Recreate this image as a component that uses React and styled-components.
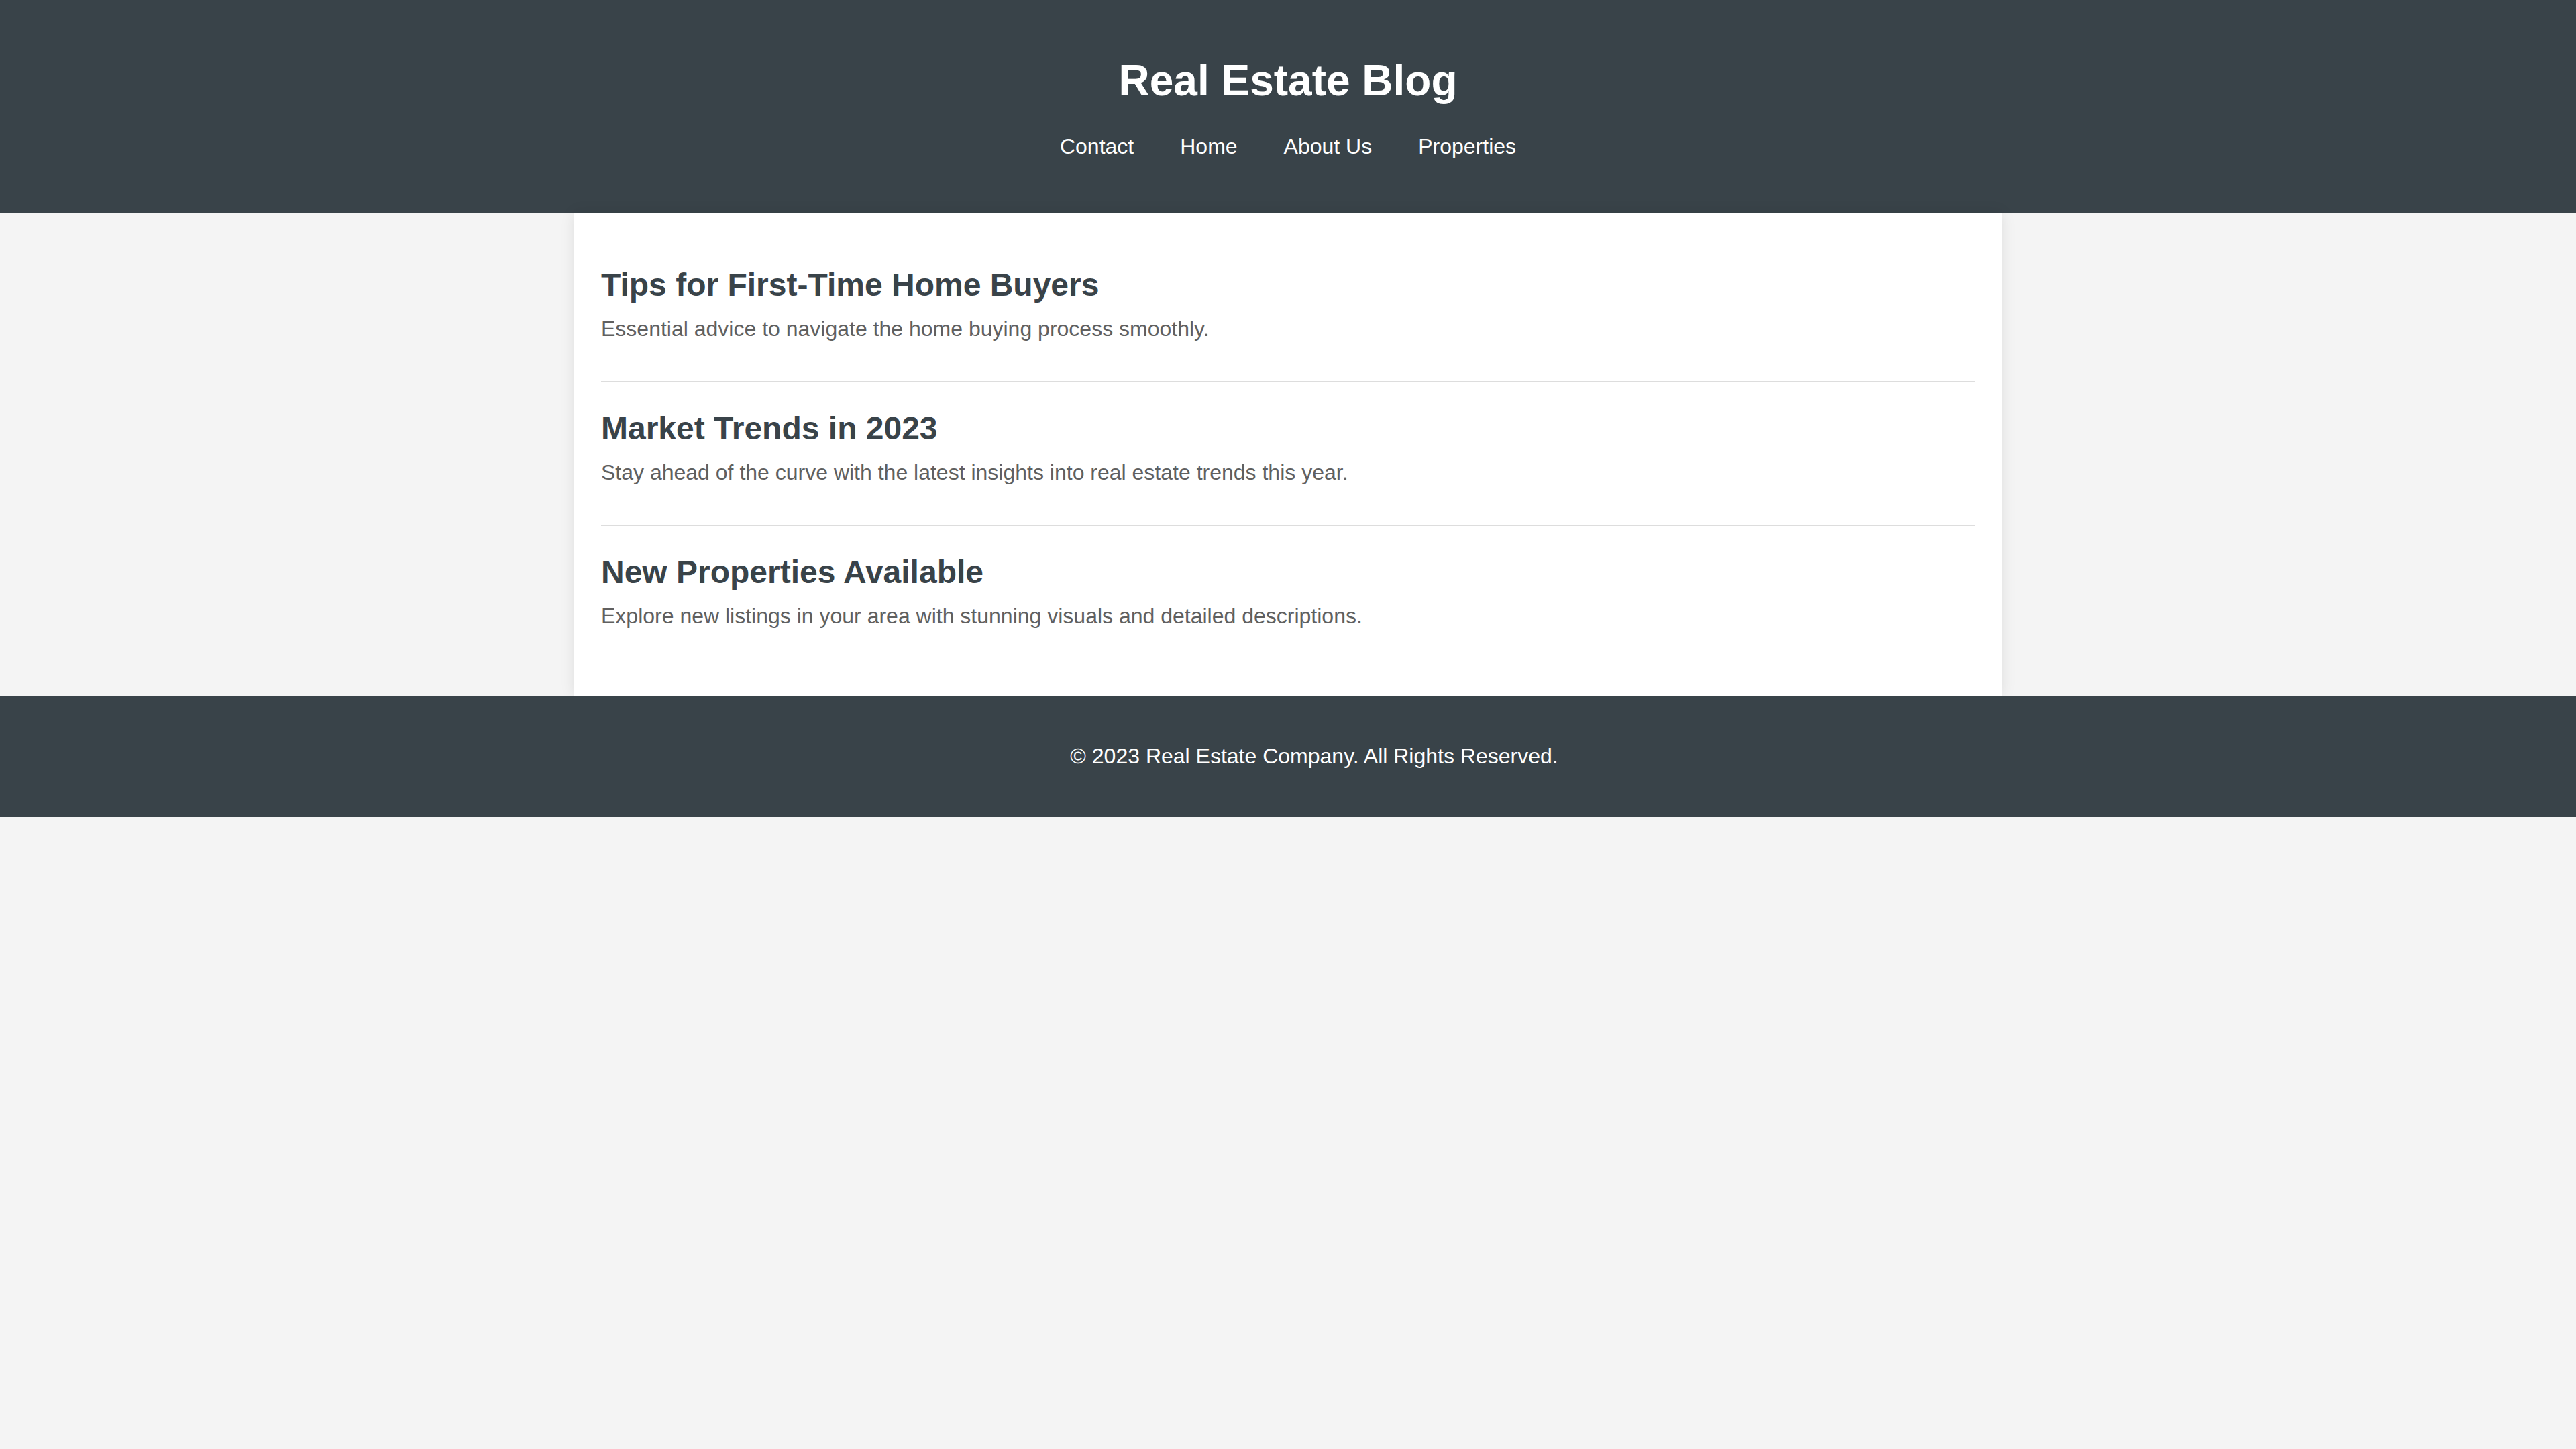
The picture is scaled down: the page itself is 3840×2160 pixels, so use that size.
import styled, { createGlobalStyle } from "styled-components";

const GlobalStyle = createGlobalStyle`
  body {
    margin: 0;
    background-color: #f4f4f4;
    font-family: "Liberation Sans", Arial, Helvetica, sans-serif;
  }
`;

const Header = styled.header`
  background-color: #394349;
  color: #fff;
  text-align: center;
  padding: 40px 0 81px;

  >h1 {
    font-size: 64px;
    font-weight: bold;
    margin: 43px 0;
    line-height: normal;
  }
`;

const Nav = styled.nav`
  >ul {
    margin: 0;
    padding: 0;
    list-style-type: none;
    display: flex;
    justify-content: center;
    gap: 69px;

    >li {
      font-size: 32px;
      line-height: normal;

      >a {
        color: #fff;
        text-decoration: none;
      }
    }
  }
`;

const Card = styled.main`
  box-sizing: border-box;
  width: 2128px;
  margin: 0 auto;
  padding: 38px 40px 41px;
  background-color: #fff;
  box-shadow: 0 0 20px rgba(0, 0, 0, 0.1);
`;

const Post = styled.article`
  padding-bottom: 59px;
  border-bottom: ${(props) => (props.$last ? "none" : "2px solid #ddd")};

  >h2 {
    font-size: 48px;
    font-weight: bold;
    color: #394349;
    margin: 41px 0 20px;
    line-height: normal;
  }

  >p {
    font-size: 32px;
    color: #606060;
    margin: 0;
    line-height: normal;
  }
`;

const Footer = styled.footer`
  background-color: #394349;
  color: #fff;
  text-align: center;
  padding: 72px 0 72px 78px;

  >p {
    margin: 0;
    font-size: 32px;
    line-height: normal;
  }
`;

const posts = [
  {
    title: "Tips for First-Time Home Buyers",
    text: "Essential advice to navigate the home buying process smoothly.",
  },
  {
    title: "Market Trends in 2023",
    text: "Stay ahead of the curve with the latest insights into real estate trends this year.",
  },
  {
    title: "New Properties Available",
    text: "Explore new listings in your area with stunning visuals and detailed descriptions.",
  },
];

const App = () => {
  return (
    <>
      <GlobalStyle />
      <Header>
        <h1>Real Estate Blog</h1>
        <Nav>
          <ul>
            <li><a href="#contact">Contact</a></li>
            <li><a href="#home">Home</a></li>
            <li><a href="#about">About Us</a></li>
            <li><a href="#properties">Properties</a></li>
          </ul>
        </Nav>
      </Header>
      <Card>
        {posts.map((post, i) => (
          <Post key={post.title} $last={i === posts.length - 1}>
            <h2>{post.title}</h2>
            <p>{post.text}</p>
          </Post>
        ))}
      </Card>
      <Footer>
        <p>&copy; 2023 Real Estate Company. All Rights Reserved.</p>
      </Footer>
    </>
  );
};

export default App;
